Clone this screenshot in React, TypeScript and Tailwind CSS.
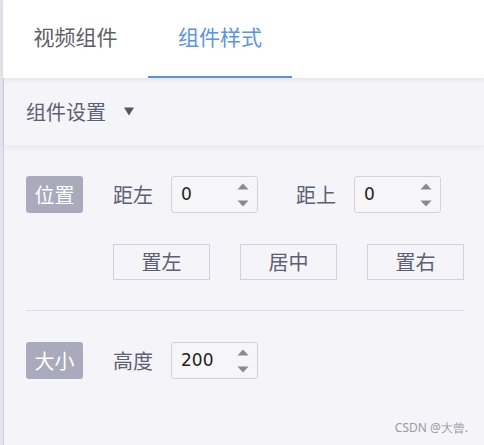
import { useState } from "react";

function Spinner() {
  return (
    <div className="flex flex-col items-center justify-between h-[24px] mr-[8px]">
      <svg width="12" height="7" viewBox="0 0 12 7">
        <path d="M6 0.5 L11.5 6.5 L0.5 6.5 Z" fill="#8a8a8e" />
      </svg>
      <svg width="12" height="7" viewBox="0 0 12 7">
        <path d="M0.5 0.5 L11.5 0.5 L6 6.5 Z" fill="#8a8a8e" />
      </svg>
    </div>
  );
}

function NumInput({ value }: { value: string }) {
  return (
    <div className="flex items-center justify-between w-[87px] h-[37px] rounded-[3px] border border-[#d3d3d9] bg-[#f6f6f8]">
      <span className="pl-[9px] text-[17px] text-[#1e1e1e] [font-family:'DejaVu_Sans',sans-serif]">
        {value}
      </span>
      <Spinner />
    </div>
  );
}

function Badge({ text }: { text: string }) {
  return (
    <div className="flex items-center justify-center w-[57px] h-[37px] rounded-[3px] bg-[#a9aabc] text-white text-[20px]">
      {text}
    </div>
  );
}

export default function App() {
  const [tab, setTab] = useState(1);
  const tabs = ["视频组件", "组件样式"];

  return (
    <div className="flex w-[484px] h-[445px] bg-[#f4f4f9] [font-family:'Noto_Sans_CJK_SC',sans-serif] overflow-hidden relative">
      <div className="w-[3px] h-full bg-[#e4e4ea]" />
      <div className="flex-1 flex flex-col">
        {/* tabs */}
        <div className="relative z-20 flex h-[78px] bg-white shadow-[0_2px_5px_rgba(0,0,0,0.07)]">
          {tabs.map((t, i) => (
            <button
              key={t}
              onClick={() => setTab(i)}
              className={
                "flex items-center justify-center h-full text-[21px] border-b-2 " +
                (i === 0 ? "w-[145px] " : "w-[144px] ") +
                (tab === i
                  ? "text-[#5a93ea] border-[#5a8fe6]"
                  : "text-[#5f5f66] border-transparent")
              }
            >
              <span className="-mt-[2px]">{t}</span>
            </button>
          ))}
        </div>

        <div className="flex-1 flex flex-col border-l border-[#cbcbe6]">
          {/* section header */}
          <div className="relative z-10 flex items-center h-[67px] pl-[22px] shadow-[0_3px_5px_rgba(0,0,0,0.05)]">
            <span className="text-[20px] text-[#5c6074]">组件设置</span>
            <svg className="ml-[18px]" width="10" height="9" viewBox="0 0 10 9">
              <path d="M0 0.5 L10 0.5 L5 8.5 Z" fill="#52566a" />
            </svg>
          </div>

          {/* content */}
          <div className="flex-1 flex flex-col pl-[22px] pt-[31px] text-[#5c6074]">
            <div className="flex items-center">
              <Badge text="位置" />
              <span className="ml-[30px] text-[20px]">距左</span>
              <div className="ml-[18px]">
                <NumInput value="0" />
              </div>
              <span className="ml-[38px] text-[20px]">距上</span>
              <div className="ml-[18px]">
                <NumInput value="0" />
              </div>
            </div>

            <div className="flex gap-[30px] ml-[87px] mt-[31px]">
              {["置左", "居中", "置右"].map((b) => (
                <button
                  key={b}
                  className="w-[97px] h-[36px] border border-[#cfd2dc] text-[20px] text-[#5c6074] flex items-center justify-center"
                >
                  {b}
                </button>
              ))}
            </div>

            <div className="w-[438px] h-px bg-[#dcdcec] mt-[30px]" />

            <div className="flex items-center mt-[31px]">
              <Badge text="大小" />
              <span className="ml-[30px] text-[20px]">高度</span>
              <div className="ml-[18px]">
                <NumInput value="200" />
              </div>
            </div>
          </div>
        </div>
      </div>

      <div className="absolute right-[16px] bottom-[8px] text-[12px] text-[#9a9a9e] [font-family:'Noto_Sans',sans-serif]">
        CSDN @大曾.
      </div>
    </div>
  );
}
